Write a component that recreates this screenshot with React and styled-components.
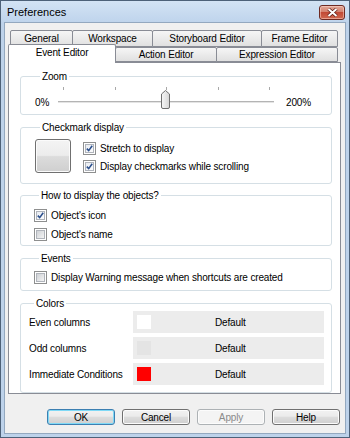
import React from 'react';
import styled, { createGlobalStyle } from 'styled-components';

const GlobalStyle = createGlobalStyle`
  html, body { margin: 0; padding: 0; background: #fff; }
  body {
    font-family: "Liberation Sans", Arial, sans-serif;
    font-size: 10px;
    letter-spacing: -0.15px;
    color: #000;
  }
  * { box-sizing: border-box; }
`;

const Window = styled.div`
  width: 350px;
  height: 438px;
  border: 1px solid #4d6178;
  background: #bdd2ea;
  display: flex;
  flex-direction: column;
`;

const TitleBar = styled.div`
  height: 21px;
  flex: none;
  display: flex;
  align-items: center;
  justify-content: space-between;
  padding: 0 4px 0 6px;
  background: linear-gradient(#d3e3f4, #bfd4ec);
`;

const Title = styled.span`
  font-size: 11px;
  letter-spacing: 0;
`;

const CloseButton = styled.div`
  width: 26px;
  height: 15px;
  margin-top: 2px;
  border: 1px solid #6e2a22;
  border-radius: 3px;
  background: linear-gradient(#e2a898, #d4826f 45%, #c24a36 50%, #d0684f);
  display: flex;
  align-items: center;
  justify-content: center;
  box-shadow: inset 0 0 0 1px rgba(255, 220, 210, 0.5);
`;

const Client = styled.div`
  flex: 1;
  margin: 0 3px 3px;
  border: 1px solid #93a8bf;
  background: #f0f0f0;
  padding: 7px 4px 0 3px;
  display: flex;
  flex-direction: column;
`;

const TabRow = styled.div`
  display: flex;
  align-items: flex-end;
  height: ${(p) => p.$h}px;
  padding-left: 2px;
`;

const Tab = styled.div`
  position: relative;
  width: ${(p) => p.$w}px;
  height: ${(p) => (p.$active ? 19 : p.$h)}px;
  margin-left: ${(p) => (p.$active ? -2 : p.$first ? 0 : -1)}px;
  margin-bottom: ${(p) => (p.$active ? -1 : 0)}px;
  z-index: ${(p) => (p.$active ? 2 : 1)};
  border: 1px solid #898c95;
  border-bottom: ${(p) => (p.$active ? 'none' : '1px solid #898c95')};
  border-radius: 2px 2px 0 0;
  background: ${(p) =>
    p.$active ? '#fff' : 'linear-gradient(#f6f6f6, #ebebeb 50%, #e0e0e0)'};
  display: flex;
  align-items: ${(p) => (p.$active ? 'flex-start' : 'center')};
  padding-top: ${(p) => (p.$active ? 2 : 0)}px;
  justify-content: center;
  white-space: nowrap;
`;

const Panel = styled.div`
  position: relative;
  z-index: 1;
  height: 332px;
  border: 1px solid #898c95;
  background: #fff;
  padding: 0 8px 0 11px;
`;

const Group = styled.fieldset`
  margin: ${(p) => p.$mt}px 0 0;
  padding: ${(p) => p.$pad};
  border: 1px solid #d5dfe5;
  border-radius: 3px;
  min-width: 0;
`;

const Legend = styled.legend`
  margin-left: 5px;
  padding: 0 2px;
  line-height: 13px;
  font-size: 10px;
`;

const SliderRow = styled.div`
  display: flex;
  align-items: flex-start;
  height: 23px;
`;

const SliderLabel = styled.span`
  width: ${(p) => p.$w}px;
  margin-left: ${(p) => p.$ml || 0}px;
  margin-top: 9px;
  line-height: 13px;
`;

const Row = styled.div`
  display: flex;
  align-items: flex-start;
`;

const PreviewButton = styled.div`
  width: 36px;
  height: 34px;
  flex: none;
  border: 1px solid #707070;
  border-radius: 3px;
  background: linear-gradient(#f4f4f4, #ececec 48%, #dcdcdc 52%, #cfcfcf);
  box-shadow: inset 0 0 0 1px #fbfbfb;
`;

const CheckList = styled.div`
  display: flex;
  flex-direction: column;
  margin-left: ${(p) => p.$ml || 0}px;
`;

const CheckRow = styled.label`
  display: flex;
  align-items: center;
  gap: 4px;
  height: ${(p) => p.$h || 18}px;
  white-space: nowrap;
`;

const Box = styled.span`
  width: 13px;
  height: 13px;
  flex: none;
  border: 1px solid #8e8f8f;
  background: #fff;
  padding: 1px;
  display: flex;
`;

const BoxInner = styled.span`
  flex: 1;
  border: 1px solid #b0b4bb;
  background: ${(p) =>
    p.$checked
      ? 'linear-gradient(135deg, #e8ecf2, #fbfbfc)'
      : 'linear-gradient(135deg, #cfd2d6, #f4f4f4)'};
  display: flex;
  align-items: center;
  justify-content: center;
`;

const ColorList = styled.div`
  display: flex;
  flex-direction: column;
  gap: 4px;
`;

const ColorRow = styled.div`
  display: grid;
  grid-template-columns: 104px 191px;
  height: 22px;
  align-items: center;
`;

const ColorField = styled.div`
  height: 22px;
  background: #ececec;
  display: flex;
  align-items: center;
  padding-left: 4px;
`;

const Swatch = styled.span`
  width: 14px;
  height: 14px;
  flex: none;
  background: ${(p) => p.$color};
`;

const ColorText = styled.span`
  margin-left: 64px;
`;

const ButtonBar = styled.div`
  display: flex;
  justify-content: flex-end;
  gap: 7px;
  margin-top: 15px;
  padding-right: 1px;
`;

const Button = styled.button`
  width: 68px;
  height: 16px;
  padding: 0;
  font: inherit;
  font-size: 10px;
  letter-spacing: inherit;
  color: ${(p) => (p.disabled ? '#8a8a8a' : '#000')};
  border: 1px solid ${(p) => (p.$default ? '#3c7fb1' : p.disabled ? '#adb2b5' : '#707070')};
  border-radius: 3px;
  background: ${(p) =>
    p.disabled ? '#f4f4f4' : 'linear-gradient(#f2f2f2, #ebebeb 45%, #dddddd 50%, #cfcfcf)'};
  box-shadow: ${(p) => (p.$default ? 'inset 0 0 0 1px #7fd9f6' : 'inset 0 0 0 1px #fcfcfc')};
`;

const CheckBox = ({ checked }) => (
  <Box>
    <BoxInner $checked={checked}>
      {checked && (
        <svg width="7" height="7" viewBox="0 0 7 7">
          <path d="M0.8 3.6 L2.7 5.6 L6.2 0.8" fill="none" stroke="#2b4f8c" strokeWidth="1.6" />
        </svg>
      )}
    </BoxInner>
  </Box>
);

const Slider = () => {
  const ticks = [5, 57, 108, 160, 211];
  return (
    <svg width="216" height="23" viewBox="0 0 216 23">
      <defs>
        <linearGradient id="thumb" x1="0" y1="0" x2="1" y2="0">
          <stop offset="0" stopColor="#f7f7f7" />
          <stop offset="1" stopColor="#d6d6d6" />
        </linearGradient>
      </defs>
      {ticks.map((x) => (
        <rect key={x} x={x} y="0" width="1" height="3" fill="#a9a9a9" />
      ))}
      <rect x="0" y="14" width="216" height="1" fill="#b4b4b4" />
      <rect x="0" y="15" width="216" height="1" fill="#e4e4e4" />
      <path
        d="M103.5 7 L107.5 3.5 L111.5 7 V20 Q111.5 21.5 110 21.5 H105 Q103.5 21.5 103.5 20 Z"
        fill="url(#thumb)"
        stroke="#6f6f6f"
      />
    </svg>
  );
};

const backTabs = [
  ['General', 63],
  ['Workspace', 81],
  ['Storyboard Editor', 110],
  ['Frame Editor', 77],
];

const frontTabs = [
  ['Event Editor', 108, true],
  ['Action Editor', 102],
  ['Expression Editor', 122],
];

const colors = [
  ['Even columns', '#ffffff'],
  ['Odd columns', '#e4e4e4'],
  ['Immediate Conditions', '#ff0000'],
];

export default function App() {
  return (
    <>
      <GlobalStyle />
      <Window>
        <TitleBar>
          <Title>Preferences</Title>
          <CloseButton>
            <svg width="11" height="9" viewBox="0 0 11 9">
              <path d="M1.5 1 L9.5 8 M9.5 1 L1.5 8" stroke="#5a1a12" strokeWidth="3.4" />
              <path d="M1.5 1 L9.5 8 M9.5 1 L1.5 8" stroke="#fff" strokeWidth="2" />
            </svg>
          </CloseButton>
        </TitleBar>
        <Client>
          <TabRow $h={17}>
            {backTabs.map(([t, w], i) => (
              <Tab key={t} $w={w} $h={17} $first={i === 0}>
                {t}
              </Tab>
            ))}
          </TabRow>
          <TabRow $h={15}>
            {frontTabs.map(([t, w, active], i) => (
              <Tab key={t} $w={w} $h={15} $first={i === 0} $active={active}>
                {t}
              </Tab>
            ))}
          </TabRow>
          <Panel>
            <Group $mt={7} $pad="4px 0 4px 14px">
              <Legend>Zoom</Legend>
              <SliderRow>
                <SliderLabel $w={23}>0%</SliderLabel>
                <Slider />
                <SliderLabel $w={30} $ml={12}>200%</SliderLabel>
              </SliderRow>
            </Group>

            <Group $mt={6} $pad="5px 0 8px 14px">
              <Legend>Checkmark display</Legend>
              <Row>
                <PreviewButton />
                <CheckList $ml={12}>
                  <CheckRow>
                    <CheckBox checked />
                    Stretch to display
                  </CheckRow>
                  <CheckRow>
                    <CheckBox checked />
                    Display checkmarks while scrolling
                  </CheckRow>
                </CheckList>
              </Row>
            </Group>

            <Group $mt={5} $pad="4px 0 1px 13px">
              <Legend>How to display the objects?</Legend>
              <CheckList>
                <CheckRow $h={19}>
                  <CheckBox checked />
                  Object's icon
                </CheckRow>
                <CheckRow $h={19}>
                  <CheckBox />
                  Object's name
                </CheckRow>
              </CheckList>
            </Group>

            <Group $mt={6} $pad="3px 0 4px 13px">
              <Legend>Events</Legend>
              <CheckRow>
                <CheckBox />
                Display Warning message when shortcuts are created
              </CheckRow>
            </Group>

            <Group $mt={6} $pad="1px 7px 7px 8px">
              <Legend>Colors</Legend>
              <ColorList>
                {colors.map(([label, c]) => (
                  <ColorRow key={label}>
                    <span>{label}</span>
                    <ColorField>
                      <Swatch $color={c} />
                      <ColorText>Default</ColorText>
                    </ColorField>
                  </ColorRow>
                ))}
              </ColorList>
            </Group>
          </Panel>
          <ButtonBar>
            <Button $default>OK</Button>
            <Button>Cancel</Button>
            <Button disabled>Apply</Button>
            <Button>Help</Button>
          </ButtonBar>
        </Client>
      </Window>
    </>
  );
}
